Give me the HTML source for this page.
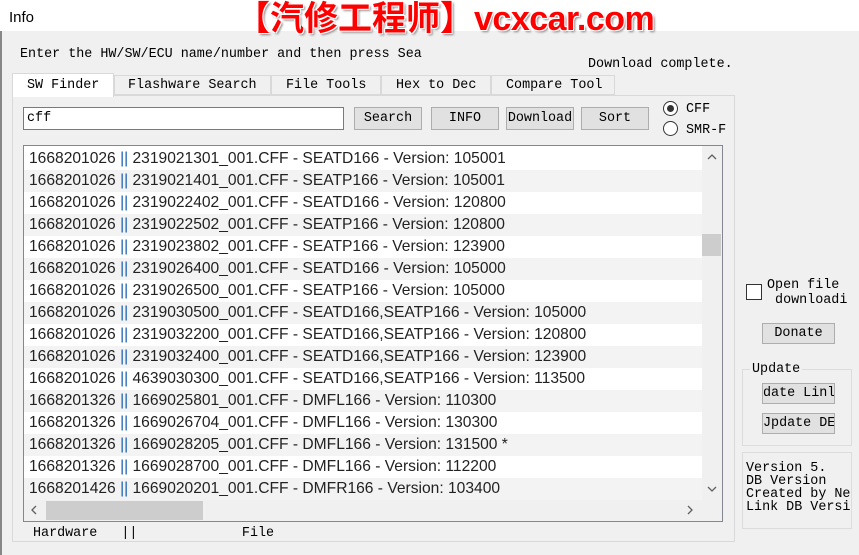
<!DOCTYPE html>
<html><head><meta charset="utf-8"><style>
*{margin:0;padding:0;box-sizing:border-box}
body{width:859px;height:555px;background:#f0f0f0;position:relative;overflow:hidden;font-family:"Liberation Mono","Noto Sans CJK SC",monospace;font-size:13.4px;color:#000}
.a{position:absolute;white-space:pre}
.btn{position:absolute;background:#e1e1e1;border:1px solid #adadad;text-align:center;font-size:13.4px;line-height:21px;overflow:hidden;white-space:nowrap}
.row{height:22px;line-height:22px;font-family:"Liberation Sans",sans-serif;font-size:15.6px;color:#222;padding-left:5px;white-space:nowrap}
.row:nth-child(even){background:#f3f3f3}
.row:nth-child(odd){background:#fff}
.row b{font-weight:normal;color:#1a5fb4}
.list{white-space:normal}
</style></head><body>
<div class="a" style="left:0;top:0;width:859px;height:31px;background:#fff"></div>
<div class="a" style="left:0;top:31px;width:2px;height:524px;background:#888"></div>
<div class="a" style="left:9px;top:9px;font-family:'Liberation Sans',sans-serif;font-size:15px">Info</div>
<div class="a" style="left:236px;top:-1px;font-family:'Liberation Sans','Noto Sans CJK SC',sans-serif;font-weight:bold;font-size:34px;line-height:40px;color:#f00;text-shadow:1px 1px 0 #fff,-1px -1px 0 #fff,1px -1px 0 #fff,-1px 1px 0 #fff,2px 2px 2px #888">【汽修工程师】<span style="font-size:34px;letter-spacing:-0.5px">vcxcar.com</span></div>
<div class="a" style="left:20px;top:47px">Enter the HW/SW/ECU name/number and then press Sea</div>
<div class="a" style="left:588px;top:57px">Download complete.</div>
<div class="a" style="left:12px;top:73px;width:102px;height:24px;background:#fff;border:1px solid #d9d9d9;border-bottom:none;padding:4px 0 0 14px;z-index:2">SW Finder</div>
<div class="a" style="left:114px;top:75px;width:157px;height:20px;border:1px solid #d9d9d9;padding:2px 0 0 13px">Flashware Search</div>
<div class="a" style="left:271px;top:75px;width:110px;height:20px;border:1px solid #d9d9d9;padding:2px 0 0 14px">File Tools</div>
<div class="a" style="left:381px;top:75px;width:110px;height:20px;border:1px solid #d9d9d9;padding:2px 0 0 14px">Hex to Dec</div>
<div class="a" style="left:491px;top:75px;width:124px;height:20px;border:1px solid #d9d9d9;padding:2px 0 0 14px">Compare Tool</div>
<div class="a" style="left:12px;top:95px;width:723px;height:447px;background:#fff;border:1px solid #d9d9d9"></div>
<div class="a" style="left:13px;top:96px;width:721px;height:445px;background:#f0f0f0"></div>
<div class="a" style="left:23px;top:107px;width:321px;height:23px;background:#fff;border:1px solid #7a7a7a;padding:3px 0 0 3px">cff</div>
<div class="btn" style="left:354px;top:107px;width:68px;height:23px">Search</div>
<div class="btn" style="left:431px;top:107px;width:68px;height:23px">INFO</div>
<div class="btn" style="left:506px;top:107px;width:68px;height:23px">Download</div>
<div class="btn" style="left:581px;top:107px;width:68px;height:23px">Sort</div>
<div class="a" style="left:663px;top:101px;width:15px;height:15px;border:1px solid #333;border-radius:50%;background:#fff"><div style="margin:3px;width:7px;height:7px;border-radius:50%;background:#333"></div></div>
<div class="a" style="left:686px;top:102px">CFF</div>
<div class="a" style="left:663px;top:121px;width:15px;height:15px;border:1px solid #333;border-radius:50%;background:#fff"></div>
<div class="a" style="left:686px;top:123px">SMR-F</div>
<div class="a list" style="left:23px;top:145px;width:700px;height:377px;border:1px solid #828790;background:#fff;overflow:hidden"><div style="position:absolute;left:0;top:2px;width:678px;overflow:hidden"><div class="row">1668201026 <b>||</b> 2319021301_001.CFF - SEATD166 - Version: 105001</div><div class="row">1668201026 <b>||</b> 2319021401_001.CFF - SEATP166 - Version: 105001</div><div class="row">1668201026 <b>||</b> 2319022402_001.CFF - SEATD166 - Version: 120800</div><div class="row">1668201026 <b>||</b> 2319022502_001.CFF - SEATP166 - Version: 120800</div><div class="row">1668201026 <b>||</b> 2319023802_001.CFF - SEATP166 - Version: 123900</div><div class="row">1668201026 <b>||</b> 2319026400_001.CFF - SEATD166 - Version: 105000</div><div class="row">1668201026 <b>||</b> 2319026500_001.CFF - SEATP166 - Version: 105000</div><div class="row">1668201026 <b>||</b> 2319030500_001.CFF - SEATD166,SEATP166 - Version: 105000</div><div class="row">1668201026 <b>||</b> 2319032200_001.CFF - SEATD166,SEATP166 - Version: 120800</div><div class="row">1668201026 <b>||</b> 2319032400_001.CFF - SEATD166,SEATP166 - Version: 123900</div><div class="row">1668201026 <b>||</b> 4639030300_001.CFF - SEATD166,SEATP166 - Version: 113500</div><div class="row">1668201326 <b>||</b> 1669025801_001.CFF - DMFL166 - Version: 110300</div><div class="row">1668201326 <b>||</b> 1669026704_001.CFF - DMFL166 - Version: 130300</div><div class="row">1668201326 <b>||</b> 1669028205_001.CFF - DMFL166 - Version: 131500 *</div><div class="row">1668201326 <b>||</b> 1669028700_001.CFF - DMFL166 - Version: 112200</div><div class="row">1668201426 <b>||</b> 1669020201_001.CFF - DMFR166 - Version: 103400</div></div><div style="position:absolute;left:678px;top:0;width:20px;height:354px;background:#f0f0f0"></div><div style="position:absolute;left:678px;top:88px;width:19px;height:22px;background:#cdcdcd"></div><svg style="position:absolute;left:678px;top:0" width="20" height="354"><polyline points="6,13 10,9 14,13" fill="none" stroke="#606060" stroke-width="1.3"/><polyline points="6,341 10,345 14,341" fill="none" stroke="#606060" stroke-width="1.3"/></svg><div style="position:absolute;left:0;top:354px;width:698px;height:21px;background:#f0f0f0"></div><div style="position:absolute;left:22px;top:355px;width:157px;height:19px;background:#cdcdcd"></div><svg style="position:absolute;left:0;top:354px" width="698" height="21"><polyline points="12,6 8,10 12,14" fill="none" stroke="#606060" stroke-width="1.3"/><polyline points="664,6 668,10 664,14" fill="none" stroke="#606060" stroke-width="1.3"/></svg></div>
<div class="a" style="left:33px;top:526px">Hardware   ||             File</div>
<div class="a" style="left:746px;top:284px;width:16px;height:16px;border:1px solid #333;background:#fff"></div>
<div class="a" style="left:767px;top:278px;line-height:15px">Open file
 downloadi</div>
<div class="btn" style="left:762px;top:323px;width:73px;height:21px;line-height:19px">Donate</div>
<div class="a" style="left:742px;top:369px;width:110px;height:77px;border:1px solid #dcdcdc"></div>
<div class="a" style="left:750px;top:362px;background:#f0f0f0;padding:0 2px">Update</div>
<div class="btn" style="left:762px;top:383px;width:73px;height:21px;line-height:19px;text-align:right">date Linl</div>
<div class="btn" style="left:762px;top:413px;width:73px;height:21px;line-height:19px;text-align:right">Jpdate DE</div>
<div class="a" style="left:742px;top:452px;width:110px;height:77px;border:1px solid #dcdcdc;overflow:hidden;padding:9px 0 0 3px;line-height:13px">Version 5.
DB Version
Created by Ne
Link DB Versi</div>
</body></html>
